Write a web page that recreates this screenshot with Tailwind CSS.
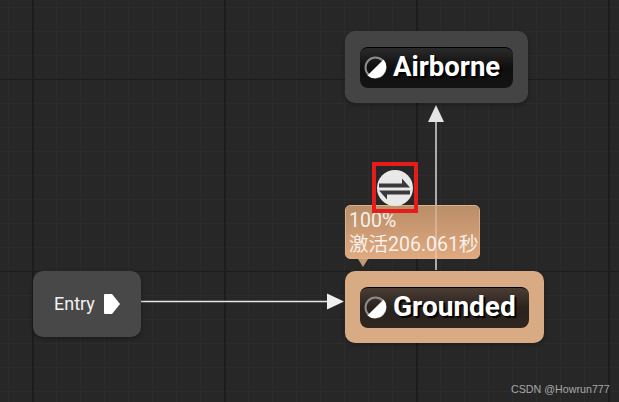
<!DOCTYPE html>
<html>
<head>
<meta charset="utf-8">
<script src="https://cdn.jsdelivr.net/npm/@tailwindcss/browser@4"></script>
</head>
<body class="m-0 bg-[#272727]">
<div class="relative w-[619px] h-[402px] overflow-hidden bg-[#272727] font-['Roboto','Noto_Sans_CJK_SC',sans-serif]">
  <div class="absolute inset-0 bg-[linear-gradient(90deg,#2c2c2c_1px,transparent_1px),linear-gradient(#2c2c2c_1px,transparent_1px)] bg-[size:24px_24px] bg-[position:8px_7px]"></div>
  <div class="absolute inset-0 bg-[linear-gradient(90deg,#1c1c1c_2px,transparent_2px),linear-gradient(#1c1c1c_1px,transparent_1px)] bg-[size:192px_192px] bg-[position:32px_79px]"></div>

  <svg class="absolute inset-0" width="619" height="402" viewBox="0 0 619 402" fill="none">
    <path d="M436 120V270" stroke="#d8d8d8" stroke-width="1.5"/>
    <path d="M436 105L428 122H444Z" fill="#e4e4e4"/>
    <path d="M141 301.500H330" stroke="#e8e8e8" stroke-width="1.5"/>
    <path d="M344 301.500L327 293.500V309.500Z" fill="#f0f0f0"/>
  </svg>

  <div class="absolute left-[345px] top-[31px] w-[183px] h-[72px] rounded-[10px] bg-[#444444] shadow-[0_2px_4px_rgba(0,0,0,0.3)] flex items-center justify-center">
    <div class="w-[153px] h-[41px] rounded-[8px] bg-[linear-gradient(#2b2b2b,#0e0e0e_50%,#141414)] border-t border-black flex items-center pl-[4px] gap-[6px]">
      <svg width="23" height="23" viewBox="0 0 23 23" class="shrink-0"><circle cx="11.500" cy="11.500" r="10" fill="none" stroke="#8c8c8c" stroke-width="2"/><path d="M19.600 3.400A11.500 11.500 0 0 1 3.400 19.600Z" fill="#ffffff"/></svg>
      <span class="text-[27.500px] leading-none font-bold text-white -translate-y-px [text-shadow:2px_2px_1px_#000]">Airborne</span>
    </div>
  </div>

  <div class="absolute left-[345px] top-[205px] w-[135px] h-[54px] rounded-[5px] bg-[linear-gradient(#b98e69,#e0a97f)] border border-[#dcb08a] px-[3px] pt-[3px] text-[19.500px] leading-[24px] text-[#f6f0ea] whitespace-nowrap">
    <div>100%</div>
    <div>激活206.061秒</div>
  </div>
  <div class="absolute left-[358px] top-[259px] w-0 h-0 border-x-[5px] border-x-transparent border-t-[8px] border-t-[#c49a74]"></div>
  <div class="absolute left-[435px] top-[206px] w-[2px] h-[52px] bg-white/25"></div>

  <div class="absolute left-[372px] top-[162px] w-[46px] h-[51px] border-[4px] border-[#e41c1c] flex items-center justify-center">
    <svg width="38" height="38" viewBox="0 0 38 38"><circle cx="19" cy="19" r="18" fill="#e9e9e9"/><path d="M3 14.500H26V9.500L34 18.500H3Z" fill="#3a3a3a"/><path d="M34 25.500H11V30.500L3 21.500H34Z" fill="#3a3a3a"/></svg>
  </div>

  <div class="absolute left-[33px] top-[271px] w-[108px] h-[66px] rounded-[10px] bg-[#484848] shadow-[0_2px_4px_rgba(0,0,0,0.3)] flex items-center pl-[21px] gap-[8px]">
    <span class="text-[18px] leading-none text-[#f2f2f2]">Entry</span>
    <svg width="18" height="22" viewBox="0 0 18 22"><path d="M1 2Q1 1 2 1H9L17 11L9 21H2Q1 21 1 20Z" fill="#ffffff"/></svg>
  </div>

  <div class="absolute left-[345px] top-[271px] w-[199px] h-[72px] rounded-[10px] bg-[#d9ab85] shadow-[0_2px_4px_rgba(0,0,0,0.3)] flex items-center justify-center">
    <div class="w-[169px] h-[41px] rounded-[8px] bg-[linear-gradient(#4a3e36,#2a221c_50%,#2e261f)] border-t border-black flex items-center pl-[4px] gap-[6px]">
      <svg width="23" height="23" viewBox="0 0 23 23" class="shrink-0"><circle cx="11.500" cy="11.500" r="10" fill="none" stroke="#8c8c8c" stroke-width="2"/><path d="M19.600 3.400A11.500 11.500 0 0 1 3.400 19.600Z" fill="#ffffff"/></svg>
      <span class="text-[28px] leading-none font-bold text-white -translate-y-px [text-shadow:2px_2px_1px_#000]">Grounded</span>
    </div>
  </div>

  <div class="absolute left-[511px] top-[384px] text-[10.700px] leading-none text-[#a8a8a8] font-['Liberation_Sans',sans-serif]">CSDN @Howrun777</div>
</div>
</body>
</html>
